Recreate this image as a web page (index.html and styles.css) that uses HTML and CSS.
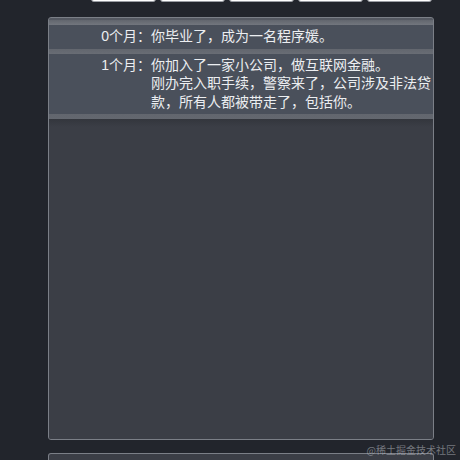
FILE: index.html
```html
<!DOCTYPE html>
<html lang="zh-CN">
<head>
<meta charset="utf-8">
<title>Log</title>
<link rel="stylesheet" href="styles.css">
</head>
<body>
<div class="page">
  <div class="toolbar">
    <span class="btn"></span>
    <span class="btn"></span>
    <span class="btn"></span>
    <span class="btn"></span>
    <span class="btn"></span>
  </div>
  <div class="panel">
    <div class="row">
      <span class="label">0个月：</span>
      <span class="text">你毕业了，成为一名程序媛。</span>
    </div>
    <div class="row">
      <span class="label">1个月：</span>
      <span class="text">你加入了一家小公司，做互联网金融。<br>刚办完入职手续，警察来了，公司涉及非法贷款，所有人都被带走了，包括你。</span>
    </div>
    <div class="filler"></div>
  </div>
  <div class="panel2"></div>
</div>
<div class="watermark">@稀土掘金技术社区</div>
</body>
</html>
```
FILE: styles.css
```css
html, body {
  margin: 0;
  padding: 0;
  height: 100%;
  overflow: hidden;
}
body {
  background: #22252c;
  font-family: "Liberation Sans", "Noto Sans CJK SC", sans-serif;
  color: #eceef1;
  position: relative;
}
.page {
  width: 386px;
  margin-left: 48px;
  display: flex;
  flex-direction: column;
}
.toolbar {
  display: flex;
  justify-content: flex-end;
  gap: 4px;
  padding-right: 2px;
  margin-top: -28px;
}
.btn {
  width: 65px;
  height: 30px;
  box-sizing: border-box;
  background: #ffffff;
  border: 1px solid #9a9da3;
  border-radius: 3px;
}
.panel {
  margin-top: 15px;
  height: 423px;
  box-sizing: border-box;
  border: 1px solid #7b7f87;
  border-radius: 3px;
  background: #3b3e46;
  padding-top: 2px;
  display: flex;
  flex-direction: column;
  overflow: hidden;
  box-shadow: inset 0 2px 0 #555962;
}
.row {
  display: flex;
  background: #4a505b;
  border-top: 5px solid transparent;
  border-image: linear-gradient(#62666e, #878b92 40%, #7e8289 65%, #5d616a) 5 0 0 0;
  padding: 2px 0 3px;
  font-size: 14px;
  line-height: 18.5px;
}
.label {
  flex: 0 0 102px;
  text-align: right;
  white-space: nowrap;
}
.text {
  width: 282px;
}
.filler {
  flex: 1;
  border-top: 5px solid transparent;
  border-image: linear-gradient(#62666e, #878b92 40%, #7e8289 65%, #5d616a) 5 0 0 0;
  background: linear-gradient(#33363d, #3b3e46 8px);
}
.panel2 {
  margin-top: 13px;
  height: 7px;
  box-sizing: border-box;
  border: 1px solid #7b7f87;
  border-bottom: 0;
  border-radius: 3px 3px 0 0;
  background: #3b3e46;
}
.watermark {
  position: absolute;
  right: 4px;
  bottom: 3px;
  font-size: 10px;
  line-height: 14px;
  color: rgba(200, 203, 210, 0.5);
  font-family: "Noto Sans CJK SC", sans-serif;
}
```
